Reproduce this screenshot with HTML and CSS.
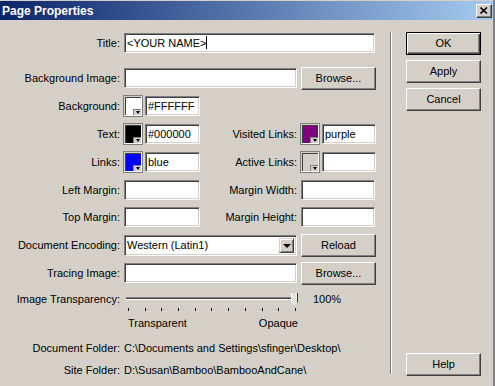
FILE: index.html
```html
<!DOCTYPE html>
<html lang="en">
<head>
    <meta charset="UTF-8">
    <title>Page Properties</title>
    <link rel="stylesheet" href="styles.css">
</head>
<body>
    <div class="dialog">
        <div class="titlebar">
            <span class="caption">Page Properties</span>
            <span class="close">
                <svg width="8" height="7" viewBox="0 0 8 7"><path d="M0.5 0.5L7 6.5M7 0.5L0.5 6.5" stroke="#000" stroke-width="1.6"/></svg>
            </span>
        </div>
        <div class="content">
            <div class="main">
                <div class="row r-title">
                    <span class="lbl">Title:</span>
                    <div class="field f-title">&lt;YOUR NAME&gt;<i class="caret"></i></div>
                </div>
                <div class="row r-bgimg">
                    <span class="lbl">Background Image:</span>
                    <div class="field f-path"></div>
                    <div class="btn">Browse...</div>
                </div>
                <div class="row r-next">
                    <span class="lbl">Background:</span>
                    <span class="swatch" style="background:#fff"></span>
                    <div class="field f-color">#FFFFFF</div>
                </div>
                <div class="row r-next">
                    <span class="lbl">Text:</span>
                    <span class="swatch" style="background:#000"></span>
                    <div class="field f-color">#000000</div>
                    <span class="lbl2">Visited Links:</span>
                    <span class="swatch" style="background:#800080"></span>
                    <div class="field f-color2">purple</div>
                </div>
                <div class="row r-next">
                    <span class="lbl">Links:</span>
                    <span class="swatch" style="background:#0000ff"></span>
                    <div class="field f-color">blue</div>
                    <span class="lbl2">Active Links:</span>
                    <span class="swatch empty"></span>
                    <div class="field f-color2"></div>
                </div>
                <div class="row r-next">
                    <span class="lbl">Left Margin:</span>
                    <div class="field f-num"></div>
                    <span class="lbl2">Margin Width:</span>
                    <div class="field f-num2"></div>
                </div>
                <div class="row r-next r-short">
                    <span class="lbl">Top Margin:</span>
                    <div class="field f-num"></div>
                    <span class="lbl2">Margin Height:</span>
                    <div class="field f-num2"></div>
                </div>
                <div class="row r-next">
                    <span class="lbl">Document Encoding:</span>
                    <div class="field select">Western (Latin1)<span class="drop"></span></div>
                    <div class="btn">Reload</div>
                </div>
                <div class="row r-next">
                    <span class="lbl">Tracing Image:</span>
                    <div class="field f-path"></div>
                    <div class="btn">Browse...</div>
                </div>
                <div class="row r-slider">
                    <span class="lbl">Image Transparency:</span>
                    <div class="slider">
                        <div class="track"></div>
                        <div class="thumb"></div>
                    </div>
                    <span class="pct">100%</span>
                </div>
                <div class="ticks">
                    <i></i><i></i><i></i><i></i><i></i><i></i><i></i><i></i><i></i><i></i><i></i>
                </div>
                <div class="ends">
                    <span>Transparent</span>
                    <span>Opaque</span>
                </div>
                <div class="info i-doc">
                    <span class="lbl">Document Folder:</span>
                    <span>C:\Documents and Settings\sfinger\Desktop\</span>
                </div>
                <div class="info i-site">
                    <span class="lbl">Site Folder:</span>
                    <span>D:\Susan\Bamboo\BambooAndCane\</span>
                </div>
            </div>
            <div class="sep"></div>
            <div class="side">
                <div class="btn default">OK</div>
                <div class="btn">Apply</div>
                <div class="btn">Cancel</div>
                <div class="btn help">Help</div>
            </div>
        </div>
    </div>
</body>
</html>
```

FILE: styles.css
```css
* {
    margin: 0;
    padding: 0;
    box-sizing: border-box;
}
body {
    background-color: #d4d0c8;
    font-family: "Liberation Sans", Arial, sans-serif;
    font-size: 11px;
    color: #000;
}
.dialog {
    width: 495px;
    height: 386px;
    overflow: hidden;
    border-right: 2px solid #808080;
}

/* title bar */
.titlebar {
    margin-top: 1px;
    height: 19px;
    background: linear-gradient(to right, #0a246a, #a6caf0);
    display: flex;
    align-items: center;
    justify-content: space-between;
    padding: 0 1px 0 2px;
}
.caption {
    color: #fff;
    font-weight: bold;
    font-size: 12px;
}
.close {
    width: 16px;
    height: 14px;
    background-color: #d4d0c8;
    border: 1px solid;
    border-color: #fff #404040 #404040 #fff;
    box-shadow: inset -1px -1px #808080;
    display: flex;
    align-items: center;
    justify-content: center;
}

.content {
    display: flex;
    height: 366px;
}
.main {
    width: 390px;
    padding-top: 12px;
}
.sep {
    width: 2px;
    height: 342px;
    margin-top: 12px;
    border-left: 1px solid #808080;
    border-right: 1px solid #fff;
}
.side {
    padding: 12px 0 10px 14px;
    display: flex;
    flex-direction: column;
}
.side .btn {
    margin-bottom: 5px;
}
.side .help {
    margin-top: auto;
    margin-bottom: 0;
}

/* rows */
.row {
    display: flex;
    align-items: center;
    height: 22px;
}
.r-bgimg {
    margin-top: 13px;
}
.r-next {
    margin-top: 6px;
}
.r-short {
    margin-top: 5px;
}
.lbl {
    width: 120px;
    text-align: right;
    margin-right: 4px;
    flex-shrink: 0;
}
.lbl2 {
    width: 97px;
    text-align: right;
    margin-right: 4px;
}

/* sunken edit box */
.field {
    height: 20px;
    background-color: #fff;
    border: 1px solid;
    border-color: #808080 #fff #fff #808080;
    box-shadow: inset 1px 1px #404040, inset -1px -1px #d4d0c8;
    padding: 0 2px;
    line-height: 18px;
    white-space: nowrap;
    position: relative;
}
.f-title {
    width: 251px;
}
.caret {
    display: inline-block;
    width: 1px;
    height: 13px;
    background-color: #000;
    vertical-align: -2px;
}
.f-path {
    width: 173px;
    margin-right: 4px;
}
.f-color {
    width: 55px;
    margin-left: 3px;
}
.f-color2 {
    width: 54px;
    margin-left: 3px;
}
.f-num {
    width: 76px;
}
.f-num2 {
    width: 74px;
}
.select {
    width: 173px;
    margin-right: 4px;
    height: 21px;
}
.drop {
    position: absolute;
    right: 2px;
    top: 2px;
    width: 15px;
    height: 15px;
    background-color: #d4d0c8;
    border: 1px solid;
    border-color: #d4d0c8 #404040 #404040 #d4d0c8;
    box-shadow: inset 1px 1px #fff, inset -1px -1px #808080;
}
.drop:after {
    content: "";
    position: absolute;
    left: 3px;
    top: 5px;
    border-left: 4px solid transparent;
    border-right: 4px solid transparent;
    border-top: 4px solid #000;
}

/* colour button */
.swatch {
    width: 18px;
    height: 20px;
    border: 1px solid;
    border-color: #d4d0c8 #fff #fff #d4d0c8;
    box-shadow: inset 1px 1px #404040, 0 0 0 1px #808080;
    position: relative;
    flex-shrink: 0;
}
.swatch.empty {
    background-color: #d4d0c8 !important;
}
.swatch:after {
    content: "";
    position: absolute;
    right: 0;
    bottom: 0;
    width: 7px;
    height: 5px;
    background-color: #d4d0c8;
    border-top: 1px solid #808080;
    border-left: 1px solid #808080;
}
.swatch:before {
    content: "";
    position: absolute;
    right: 1px;
    bottom: 1px;
    z-index: 1;
    border-left: 2.5px solid transparent;
    border-right: 2.5px solid transparent;
    border-top: 3px solid #000;
}

/* raised button */
.btn {
    width: 75px;
    height: 23px;
    background-color: #d4d0c8;
    border: 1px solid;
    border-color: #fff #404040 #404040 #fff;
    box-shadow: inset -1px -1px #808080;
    text-align: center;
    line-height: 20px;
    flex-shrink: 0;
}
.btn.default {
    border: 1px solid #000;
    box-shadow: inset 1px 1px #fff, inset -1px -1px #404040, inset -2px -2px #808080;
}

/* slider */
.r-slider {
    margin-top: 6px;
    height: 18px;
}
.slider {
    width: 172px;
    height: 18px;
    margin-left: 2px;
    position: relative;
}
.track {
    margin-top: 7px;
    height: 3px;
    border-top: 1px solid #808080;
    border-bottom: 1px solid #fff;
    background-color: #404040;
}
.thumb {
    position: absolute;
    right: 0;
    top: 3px;
    width: 7px;
    height: 13px;
    background: repeating-conic-gradient(#fff 0 25%, #d4d0c8 0 50%) 0 0 / 2px 2px;
    border-left: 1px solid #fff;
    border-right: 1px solid #404040;
    clip-path: polygon(0 0, 100% 0, 100% 70%, 50% 100%, 0 70%);
}
.pct {
    margin-left: 15px;
}
.ticks {
    display: flex;
    justify-content: space-between;
    width: 168px;
    height: 3px;
    margin-left: 128px;
}
.ticks i {
    width: 1px;
    height: 3px;
    background-color: #000;
}
.ends {
    display: flex;
    justify-content: space-between;
    width: 170px;
    margin: 6px 0 0 128px;
    line-height: 13px;
}

/* folders */
.info {
    display: flex;
    line-height: 13px;
}
.i-doc {
    margin-top: 12px;
}
.i-site {
    margin-top: 9px;
}
```
